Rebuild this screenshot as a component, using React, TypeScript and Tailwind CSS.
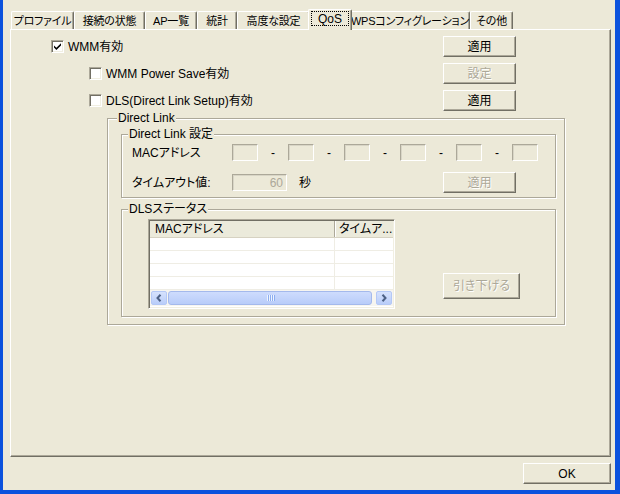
import React from "react";

const font = "font-['Liberation_Sans','Noto_Sans_CJK_JP',sans-serif] [font-feature-settings:'palt']";

type ButtonProps = { children: React.ReactNode; disabled?: boolean; className?: string };

function Button({ children, disabled, className = "" }: ButtonProps) {
  return (
    <div
      className={`flex shrink-0 items-center justify-center border border-t-white border-l-white border-r-[#716F64] border-b-[#716F64] bg-[#ECE9D8] shadow-[inset_-1px_-1px_0_#ACA899] text-[12px] leading-[14px] ${
        disabled ? "text-[#ACA899] [text-shadow:1px_1px_0_#fff]" : "text-black"
      } ${className}`}
    >
      {children}
    </div>
  );
}

function Checkbox({ checked, label }: { checked?: boolean; label: string }) {
  return (
    <div className="flex items-center gap-[4px]">
      <div className="flex h-[13px] w-[13px] shrink-0 items-center justify-center border border-t-[#ACA899] border-l-[#ACA899] border-r-white border-b-white bg-white shadow-[inset_1px_1px_0_#716F64,inset_-1px_-1px_0_#F1EFE2]">
        {checked && (
          <svg width="7" height="7" viewBox="0 0 7 7">
            <path d="M0 2.4 L2.4 4.8 L7 0.2 L7 2.6 L2.4 7 L0 4.6 Z" fill="#000" />
          </svg>
        )}
      </div>
      <span className="text-[12px] leading-[14px]">{label}</span>
    </div>
  );
}

// etched group box (classic style)
function Group({
  title,
  className = "",
  legendClass = "",
  children,
}: {
  title: string;
  className?: string;
  legendClass?: string;
  children: React.ReactNode;
}) {
  return (
    <fieldset className={`border border-[#ACA899] shadow-[inset_1px_1px_0_#fff,1px_1px_0_#fff] ${className}`}>
      <legend className={`bg-[#ECE9D8] px-[1px] text-[12px] leading-[14px] ${legendClass}`}>{title}</legend>
      {children}
    </fieldset>
  );
}

function Field({ className = "", children }: { className?: string; children?: React.ReactNode }) {
  return (
    <div
      className={`flex h-[17px] shrink-0 items-center justify-end border border-t-[#ACA899] border-l-[#ACA899] border-r-white border-b-white bg-[#ECE9D8] shadow-[inset_1px_1px_0_#D8D5C6] ${className}`}
    >
      {children}
    </div>
  );
}

function Chevron({ dir }: { dir: "left" | "right" }) {
  return (
    <svg width="6" height="8" viewBox="0 0 6 8">
      <path
        d={dir === "left" ? "M4.5 0.8 L1.5 4 L4.5 7.2" : "M1.5 0.8 L4.5 4 L1.5 7.2"}
        fill="none"
        stroke="#4D6185"
        strokeWidth="2"
      />
    </svg>
  );
}

function ScrollButton({ dir }: { dir: "left" | "right" }) {
  return (
    <div className="flex w-[16px] shrink-0 items-center justify-center rounded-[2px] border border-[#B4C8F6] bg-linear-to-b from-[#D6E2FD] to-[#B9CDF9]">
      <Chevron dir={dir} />
    </div>
  );
}

const tabs = [
  { label: "プロファイル", w: "w-[63px]" },
  { label: "接続の状態", w: "w-[71px]" },
  { label: "AP一覧", w: "w-[52px]" },
  { label: "統計", w: "w-[40px]" },
  { label: "高度な設定", w: "w-[73px]" },
  { label: "QoS", w: "w-[44px]", selected: true },
  { label: "WPSコンフィグレーション", w: "w-[120px]" },
  { label: "その他", w: "w-[43px]" },
];

export default function App() {
  const macBoxes = [0, 1, 2, 3, 4, 5];

  return (
    <div
      className={`flex h-[494px] w-[620px] flex-col border-l-[3px] border-r-[5px] border-b-[4px] border-[#0B52DD] bg-[#ECE9D8] pt-[9px] pl-[7px] pr-[4px] text-black ${font}`}
    >
      {/* tab strip */}
      <div className="flex h-[20px] items-end pl-[1px]">
        {tabs.map((t) =>
          t.selected ? (
            <div
              key={t.label}
              className={`${t.w} relative z-10 -mx-[2px] -mb-px flex h-[21px] shrink-0 justify-center rounded-t-[2px] border-l border-t border-r border-l-white border-t-white border-r-[#716F64] bg-[#ECE9D8] pt-[1px] shadow-[inset_-1px_0_0_#ACA899]`}
            >
              <span className="flex h-[15px] w-[38px] items-center justify-center border border-dotted border-black text-[12px] leading-[14px]">
                {t.label}
              </span>
            </div>
          ) : (
            <div
              key={t.label}
              className={`${t.w} flex h-[18px] shrink-0 items-center justify-center whitespace-nowrap rounded-t-[2px] border-l border-t border-r border-l-white border-t-white border-r-[#716F64] shadow-[inset_-1px_0_0_#ACA899] text-[11px] leading-[14px] tracking-[-0.2px]`}
            >
              {t.label}
            </div>
          )
        )}
      </div>

      {/* tab panel */}
      <div className="flex h-[428px] flex-col border border-t-white border-l-white border-r-[#716F64] border-b-[#716F64] shadow-[inset_-1px_-1px_0_#ACA899]">
        <div className="mt-[6px] flex h-[21px] items-center">
          <div className="ml-[40px]">
            <Checkbox checked label="WMM有効" />
          </div>
          <Button className="ml-auto mr-[94px] h-[21px] w-[73px]">適用</Button>
        </div>
        <div className="mt-[6px] flex h-[21px] items-center">
          <div className="ml-[78px]">
            <Checkbox label="WMM Power Save有効" />
          </div>
          <Button disabled className="ml-auto mr-[94px] h-[21px] w-[73px]">
            設定
          </Button>
        </div>
        <div className="mt-[6px] flex h-[21px] items-center">
          <div className="ml-[78px]">
            <Checkbox label="DLS(Direct Link Setup)有効" />
          </div>
          <Button className="ml-auto mr-[94px] h-[21px] w-[73px]">適用</Button>
        </div>

        <Group title="Direct Link" className="ml-[96px] w-[458px] pb-[7px]" legendClass="ml-[9px]">
          <Group title="Direct Link 設定" className="ml-[13px] mt-[2px] w-[435px] pb-[4px]" legendClass="ml-[6px]">
            <div className="mt-[3px] flex h-[17px] items-center">
              <span className="ml-[10px] w-[100px] shrink-0 text-[12px] leading-[14px]">MACアドレス</span>
              {macBoxes.map((i) => (
                <React.Fragment key={i}>
                  {i > 0 && <span className="w-[30px] shrink-0 text-center text-[12px] leading-[14px]">-</span>}
                  <Field className="w-[26px]" />
                </React.Fragment>
              ))}
            </div>
            <div className="mt-[11px] flex h-[21px] items-center">
              <span className="ml-[10px] w-[100px] shrink-0 text-[12px] leading-[14px]">タイムアウト値:</span>
              <Field className="w-[55px] pr-[3px]">
                <span className="text-[12px] leading-[14px] text-[#ACA899]">60</span>
              </Field>
              <span className="ml-[12px] text-[12px] leading-[14px]">秒</span>
              <Button disabled className="ml-auto mr-[39px] h-[21px] w-[73px]">
                適用
              </Button>
            </div>
          </Group>

          <Group title="DLSステータス" className="ml-[13px] mt-[4px] w-[435px] pb-[7px]" legendClass="ml-[6px]">
            <div className="mt-[3px] flex items-start">
              {/* list view */}
              <div className="ml-[26px] flex h-[90px] w-[247px] shrink-0 flex-col border border-t-[#ACA899] border-l-[#ACA899] border-r-white border-b-white bg-white p-[1px] shadow-[inset_1px_1px_0_#716F64,inset_-1px_-1px_0_#F1EFE2]">
                <div className="flex h-[17px] shrink-0 border-b border-b-[#D6D2C2] bg-[#EBEADB] text-[12px] leading-[14px]">
                  <div className="flex w-[185px] shrink-0 items-center border-r border-r-[#ACA899] pl-[5px]">MACアドレス</div>
                  <div className="flex flex-1 items-center overflow-hidden whitespace-nowrap border-l border-l-white pl-[3px]">
                    タイムア...
                  </div>
                </div>
                {[0, 1, 2, 3].map((r) => (
                  <div key={r} className="flex h-[13px] shrink-0 border-b border-b-[#EFEDE4]">
                    <div className="w-[185px] shrink-0 border-r border-r-[#EFEDE4]" />
                    <div className="flex-1" />
                  </div>
                ))}
                <div className="flex h-[16px] shrink-0 bg-[#F6F5F0] p-px">
                  <ScrollButton dir="left" />
                  <div className="mx-[1px] mr-[4px] flex flex-1 items-center justify-center gap-[1px] rounded-[3px] border border-[#A4B9EC] bg-linear-to-b from-[#CEDCFD] to-[#B8CCF9]">
                    {[0, 1, 2, 3].map((g) => (
                      <span key={g} className="h-[6px] w-px bg-[#EEF4FE] shadow-[1px_0_0_#8DAEF0]" />
                    ))}
                  </div>
                  <ScrollButton dir="right" />
                </div>
              </div>
              <Button disabled className="ml-[48px] mt-[54px] h-[26px] w-[77px]">
                引き下げる
              </Button>
            </div>
          </Group>
        </Group>
      </div>

      {/* bottom */}
      <div className="mt-[6px] flex justify-end">
        <Button className="h-[21px] w-[88px]">OK</Button>
      </div>
    </div>
  );
}
